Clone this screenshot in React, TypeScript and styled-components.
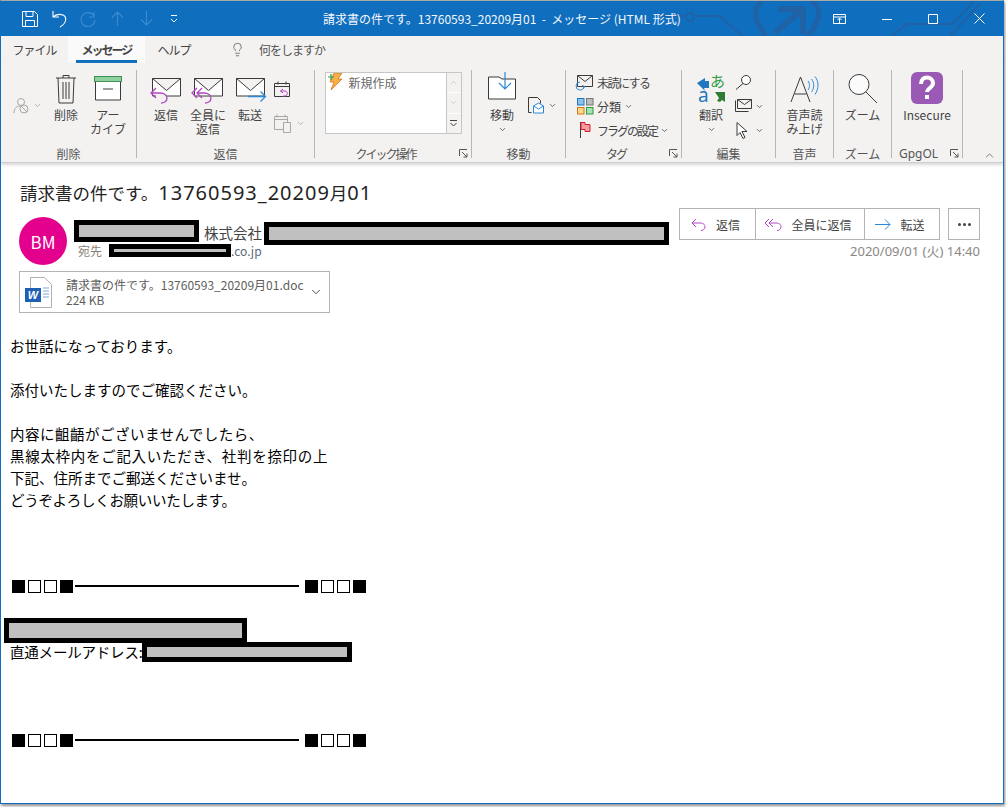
import React from 'react';
import styled, { createGlobalStyle } from 'styled-components';
import { Lightbulb, ChevronDown, ChevronUp } from 'lucide-react';

const UI = `"Noto Sans CJK JP", "Noto Sans", sans-serif`;
const GlobalStyle = createGlobalStyle`
  html, body { margin: 0; padding: 0; background: #fff; }
  * { box-sizing: border-box; }
  body { font-family: ${UI}; width: 1006px; height: 807px; overflow: hidden; }
`;

const Win = styled.div`
  width: 1004px; height: 804px; border: 1px solid #106ebe; border-top-color: #a9a9a9;
  display: flex; flex-direction: column; background: #fff; overflow: hidden;
  box-shadow: 1px 2px 3px rgba(0, 0, 0, 0.45);
`;
const TitleBar = styled.div`
  height: 35px; background: #106ebe; display: flex; align-items: center; color: #fff; position: relative; flex: none;
`;
const Qat = styled.div`
  display: flex; align-items: center; padding-left: 21px; width: 314px; flex: none; position: relative;
`;
const QatIcon = styled.svg<{ $left?: number }>`
  margin-left: ${p => p.$left ?? 0}px; flex: none;
`;
const TitleText = styled.div`
  font-size: 12px; white-space: nowrap; padding-left: 8px; color: #f4f8fc; position: relative;
`;
const Controls = styled.div`
  margin-left: auto; display: flex; align-items: center; gap: 36px; padding-right: 18px; position: relative;
`;
const Decor = styled.svg`
  position: absolute; left: 659px; top: 0; pointer-events: none;
`;
const TabBar = styled.div`
  height: 27px; background: #f3f2f1; display: flex; align-items: stretch; font-size: 12px; color: #444; flex: none;
`;
const Tab = styled.div<{ $on?: boolean; $w: number }>`
  width: ${p => p.$w}px; display: flex; align-items: center; justify-content: center; position: relative; white-space: nowrap;
  background: ${p => (p.$on ? '#fafafa' : 'transparent')}; font-weight: ${p => (p.$on ? 700 : 400)};
  letter-spacing: ${p => (p.$on ? -2 : -1)}px;
  &::after {
    content: ''; display: ${p => (p.$on ? 'block' : 'none')}; position: absolute; left: 8px; right: 8px; bottom: 0; height: 3px; background: #106ebe;
  }
`;
const TellMe = styled.div`
  display: flex; align-items: center; gap: 14px; margin-left: 27px; color: #555; letter-spacing: -1px; white-space: nowrap;
`;
const Ribbon = styled.div`
  height: 100px; background: #f3f2f1; display: flex; border-bottom: 1px solid #d2d0ce; box-shadow: 0 2px 3px #d8d8d8; flex: none; position: relative;
`;
const Group = styled.div<{ $w: number }>`
  width: ${p => p.$w}px; flex: none; display: flex; flex-direction: column; position: relative; margin-top: 7px; height: 88px;
  border-right: 1px solid #b8b6b4;
`;
const GroupBody = styled.div<{ $left?: number; $center?: boolean }>`
  flex: 1; display: flex; justify-content: ${p => (p.$center ? 'center' : 'flex-start')}; padding-left: ${p => p.$left ?? 0}px; min-height: 0;
`;
const GroupLabel = styled.div<{ $launch?: boolean; $latin?: boolean }>`
  height: 16px; margin-bottom: -4px; text-align: ${p => (p.$latin ? 'left' : 'center')}; font-size: 12px; line-height: 16px; color: #555; white-space: nowrap;
  padding: 0 ${p => (p.$launch ? 15 : 0)}px 0 ${p => (p.$latin ? 7 : 0)}px;
  font-family: ${p => (p.$latin ? '"Noto Sans", sans-serif' : 'inherit')};
  letter-spacing: ${p => (p.$launch && !p.$latin ? -2 : 0)}px;
`;
const Launcher = styled.svg`
  position: absolute; right: 3px; bottom: 0;
`;
const Big = styled.div<{ $w?: number }>`
  width: ${p => p.$w ?? 42}px; flex: none; display: flex; flex-direction: column; align-items: center; font-size: 12px; line-height: 14px; color: #444; text-align: center; white-space: nowrap;
`;
const IconSlot = styled.div<{ $top: number }>`
  height: 38px; padding-top: ${p => p.$top}px; display: flex; justify-content: center; svg { overflow: visible; flex: none; }
`;
const Caret = styled.div`
  height: 14px; display: flex; align-items: center; justify-content: center;
`;
const Stack = styled.div<{ $top?: number; $left?: number; $gap?: number; $w?: number }>`
  display: flex; flex-direction: column; flex: none; font-size: 12px; color: #444;
  padding-top: ${p => p.$top ?? 0}px; margin-left: ${p => p.$left ?? 0}px; gap: ${p => p.$gap ?? 0}px;
  width: ${p => (p.$w ? `${p.$w}px` : 'auto')};
`;
const SmallRow = styled.div<{ $tight?: number }>`
  display: flex; align-items: center; gap: 3px; height: 24px; white-space: nowrap; letter-spacing: ${p => p.$tight ?? 0}px;
  svg { flex: none; overflow: visible; }
`;
const Quick = styled.div`
  width: 137px; height: 62px; margin-top: 2px; display: flex; border: 1px solid #c8c6c4; background: #fff; font-size: 12px; color: #666;
`;
const QuickItem = styled.div`
  flex: 1; display: flex; align-items: flex-start; gap: 6px; padding-left: 2px; line-height: 20px;
  svg { flex: none; }
`;
const QuickScroll = styled.div`
  width: 15px; display: flex; flex-direction: column; border-left: 1px solid #c8c6c4;
`;
const QuickBtn = styled.div<{ $on?: boolean }>`
  flex: 1; display: flex; align-items: center; justify-content: center; background: #f3f2f1; border-bottom: 1px solid ${p => (p.$on ? '#c8c6c4' : '#fff')};
  color: ${p => (p.$on ? '#444' : '#c0c0c0')};
  &:last-child { border-bottom: 0; }
`;
const Collapse = styled.div`
  position: absolute; right: 7px; bottom: 0; color: #444; display: flex;
`;

const Reading = styled.div`
  flex: 1; background: #fff; display: flex; flex-direction: column; min-height: 0; font-family: ${UI};
`;
const Subject = styled.div`
  font-size: 17.5px; color: #252423; padding: 18px 0 0 19px; line-height: 24px; height: 45px; flex: none; white-space: nowrap;
`;
const SubjectNum = styled.span`
  font-family: "Noto Sans", sans-serif; font-size: 20px; letter-spacing: 1px;
`;
const HeaderRow = styled.div`
  display: flex; height: 63px; flex: none; position: relative;
`;
const Avatar = styled.div`
  width: 48px; height: 48px; border-radius: 50%; background: #e3008c; color: #fff; font-size: 17px; display: flex; align-items: center; justify-content: center; margin: 9px 7px 0 18px; flex: none;
`;
const Sender = styled.div`
  display: flex; flex-direction: column; padding-top: 12px;
`;
const NameLine = styled.div`
  display: flex; align-items: flex-start; font-size: 14.5px; color: #444; height: 24px; white-space: nowrap;
`;
const Company = styled.span`
  margin-left: 5px; line-height: 22px; padding-top: 2px; width: 60px; flex: none;
`;
const ToLine = styled.div`
  display: flex; align-items: center; font-size: 12px; color: #8a7f76; height: 13px; white-space: nowrap; margin-left: 4px;
`;
const Domain = styled.span`
  color: #5c6b80;
`;
const Redact = styled.span<{ $w: number; $h: number; $b?: number; $x?: number; $y?: number }>`
  display: inline-block; flex: none; width: ${p => p.$w}px; height: ${p => p.$h}px; background: #c0c0c0; border: ${p => p.$b ?? 5}px solid #000;
  margin-left: ${p => p.$x ?? 0}px; margin-top: ${p => p.$y ?? 0}px;
`;
const Actions = styled.div`
  position: absolute; right: 23px; top: 0; display: flex; flex-direction: column; align-items: flex-end; gap: 3px;
`;
const ActionRow = styled.div`
  display: flex; gap: 8px;
`;
const ActionGroup = styled.div`
  display: flex; height: 32px; border: 1px solid #b4b4b4; font-size: 12px; color: #444; white-space: nowrap;
`;
const ActionBtn = styled.div<{ $w: number }>`
  width: ${p => p.$w}px; display: flex; align-items: center; justify-content: center; gap: 9px; border-right: 1px solid #b4b4b4; padding-right: 4px;
  &:last-child { border-right: 0; }
`;
const More = styled.div`
  width: 32px; height: 32px; border: 1px solid #b4b4b4; display: flex; align-items: center; justify-content: center; gap: 2px;
`;
const Dot = styled.span`
  width: 3px; height: 3px; border-radius: 50%; background: #444;
`;
const DateText = styled.div`
  font-family: "Noto Sans", "Noto Sans CJK JP", sans-serif; font-size: 13px; color: #8a8886; line-height: 17px; white-space: nowrap;
`;
const Attachment = styled.div`
  width: 311px; height: 42px; margin-left: 18px; border: 1px solid #b4b4b4; display: flex; align-items: center; padding-left: 5px; flex: none;
`;
const AttachText = styled.div`
  font-size: 12px; line-height: 15px; color: #605e5c; margin-left: 11px; white-space: nowrap; width: 243px;
`;
const Body = styled.div`
  padding: 22px 0 0 9px; font-family: "Noto Sans CJK JP", sans-serif; font-size: 14.5px; line-height: 22px; color: #000; position: relative; flex: 1;
`;
const Line = styled.div<{ $left?: number; $track?: number }>`
  height: 22px; white-space: nowrap; display: flex; align-items: center; margin-left: ${p => p.$left ?? 0}px; letter-spacing: ${p => p.$track ?? 0}px;
`;
const Rule = styled.div`
  height: 22px; display: flex; align-items: center; margin-left: 2px;
`;
const Sq = styled.span<{ $fill?: boolean }>`
  width: 13px; height: 13px; margin-right: 3px; flex: none; border: 1px solid #000; background: ${p => (p.$fill ? '#000' : '#fff')};
`;
const Dash = styled.span`
  width: 224px; height: 2px; background: #000; margin: 0 6px 0 -1px; flex: none;
`;
const Gap = styled.div<{ $h: number }>`
  height: ${p => p.$h}px;
`;

const I = { stroke: '#3a3a3a', fill: 'none', strokeWidth: 1 };

const Pattern = () => (
  <>
    <Sq $fill /><Sq /><Sq /><Sq $fill />
    <Dash />
    <Sq $fill /><Sq /><Sq /><Sq $fill />
  </>
);

const Launch = () => (
  <Launcher width="9" height="9" viewBox="0 0 9 9">
    <path d="M.5 7V.5H8M3 3l5 5M8 4.500V8H4.500" fill="none" stroke="#555" />
  </Launcher>
);

const Envelope = ({ arrow }: { arrow: 'reply' | 'all' | 'fwd' }) => (
  <svg width="34" height="28" viewBox="0 0 34 28">
    <path d="M3.500 .5h28v17.500h-28zM3.500 .5l14 12 14-12" {...I} fill="#fff" />
    {arrow === 'reply' && <path d="M7 10l-5 5 5 5M2 15h9c5 0 7 3 7 5.500s-3 4.500-6 4.500" fill="#f3f2f1" stroke="#b146c2" strokeWidth="1.300" />}
    {arrow === 'all' && <path d="M6 10l-5 5 5 5M11 10l-5 5 5 5M6 15h7c5 0 7 3 7 5.500s-3 4.500-6 4.500" fill="none" stroke="#b146c2" strokeWidth="1.300" />}
    {arrow === 'fwd' && <path d="M15 18.500h17M27.500 13.500l5 5-5 5" fill="none" stroke="#2b88d8" strokeWidth="1.300" />}
  </svg>
);

export default function App() {
  return (
    <>
      <GlobalStyle />
      <Win>
        <TitleBar>
          <Decor width="343" height="35" viewBox="0 0 343 35">
            <g fill="none" stroke="#1f62a6">
              <path d="M0 15h24M36 15h24l22 20" strokeWidth="2" />
              <circle cx="30" cy="16" r="4" strokeWidth="2" />
              <path d="M106 35c-14-18-13-28-4-35M148 35c14-18 13-28 4-35" strokeWidth="5" />
              <path d="M115 32L143 8M118 8h25v25" strokeWidth="6" />
              <path d="M232 35l15-12h45l22-23M290 35l30-32" strokeWidth="2" />
            </g>
          </Decor>
          <Qat>
            <QatIcon width="16" height="16" viewBox="0 0 16 16" fill="none" stroke="#fff"><path d="M.5.5h12l3 3v12H.500zM4 .5v5h7v-5M3.500 15.500v-6h9v6" /></QatIcon>
            <QatIcon $left={14} width="15" height="18" viewBox="0 0 15 18" fill="none" stroke="#fff" strokeWidth="1.100"><path d="M1 1v6h6M1 7c3-3 7-3 10-2 4 2 4 8-3 12" /></QatIcon>
            <QatIcon $left={13} width="16" height="16" viewBox="0 0 16 16" fill="none" stroke="#3d8ccf" strokeWidth="1.100"><path d="M14 1v5h-5M14 5a7 7 0 1 0 1 4" /></QatIcon>
            <QatIcon $left={15} width="13" height="15" viewBox="0 0 13 15" fill="none" stroke="#3d8ccf" strokeWidth="1.100"><path d="M6.500 15V1M1 6.500L6.500 1 12 6.500" /></QatIcon>
            <QatIcon $left={16} width="13" height="15" viewBox="0 0 13 15" fill="none" stroke="#3d8ccf" strokeWidth="1.100"><path d="M6.500 0v14M1 8.500l5.500 5.500L12 8.500" /></QatIcon>
            <QatIcon $left={17} width="8" height="8" viewBox="0 0 8 8" fill="none" stroke="#fff"><path d="M1 .5h6M1 4l3 3 3-3" /></QatIcon>
          </Qat>
          <TitleText>請求書の件です。13760593_20209月01&nbsp; -&nbsp; メッセージ (HTML 形式)</TitleText>
          <Controls>
            <svg width="13" height="10" viewBox="0 0 13 10" fill="none" stroke="#fff"><path d="M.5.5h12v9H.500zM.5 3h12M6.500 9V4.500M4.500 6l2-2 2 2" /></svg>
            <svg width="10" height="10" viewBox="0 0 10 10" stroke="#fff"><path d="M0 5.500h10" /></svg>
            <svg width="10" height="10" viewBox="0 0 10 10" fill="none" stroke="#fff"><path d="M.5.5h9v9h-9z" /></svg>
            <svg width="11" height="11" viewBox="0 0 11 11" fill="none" stroke="#fff"><path d="M.5.5l10 10M10.500.5l-10 10" /></svg>
          </Controls>
        </TitleBar>

        <TabBar>
          <Tab $w={67}>ファイル</Tab>
          <Tab $on $w={77}>メッセージ</Tab>
          <Tab $w={58}>ヘルプ</Tab>
          <TellMe><Lightbulb size={15} strokeWidth={1.200} />何をしますか</TellMe>
        </TabBar>

        <Ribbon>
          <Group $w={136}>
            <GroupBody>
              <Stack $top={23} $left={12} $w={33}>
                <SmallRow>
                  <svg width="17" height="17" viewBox="0 0 17 17" fill="none" stroke="#a8a8a8"><circle cx="8" cy="5" r="3.500" /><path d="M1 16c0-5 3-7 6-7" /><circle cx="11" cy="12" r="4" /><path d="M8 9l6 6" /></svg>
                  <ChevronDown size={9} color="#a0a0a0" />
                </SmallRow>
              </Stack>
              <Big $w={40}>
                <IconSlot $top={4}>
                  <svg width="22" height="30" viewBox="0 0 22 30" fill="none" stroke="#3a3a3a">
                    <path d="M1 4h20M3 4l1 25h14l1-25M8 4V1.500h6V4M8 8v17M11 8v17M14 8v17" />
                  </svg>
                </IconSlot>
                削除
              </Big>
              <Big $w={44}>
                <IconSlot $top={6}>
                  <svg width="28" height="25" viewBox="0 0 28 25">
                    <path d="M1.500 1h25v23h-25z" fill="#fff" stroke="#3a3a3a" />
                    <rect x=".5" y=".5" width="27" height="5" fill="#8fd19e" stroke="#3f8f55" />
                    <path d="M9 13h10" stroke="#3a3a3a" />
                  </svg>
                </IconSlot>
                アー<br />カイブ
              </Big>
            </GroupBody>
            <GroupLabel>削除</GroupLabel>
          </Group>

          <Group $w={178}>
            <GroupBody $left={8}>
              <Big $w={42}><IconSlot $top={8}><Envelope arrow="reply" /></IconSlot>返信</Big>
              <Big $w={42}><IconSlot $top={8}><Envelope arrow="all" /></IconSlot>全員に<br />返信</Big>
              <Big $w={42}><IconSlot $top={8}><Envelope arrow="fwd" /></IconSlot>転送</Big>
              <Stack $top={11} $left={3} $gap={13}>
                <svg width="17" height="17" viewBox="0 0 17 17" fill="none"><path d="M.5 2.500h15v13H.500zM.5 5.500h15M4 .5v3M12 .5v3" stroke="#3a3a3a" /><path d="M9 8L6.500 10 9 12M6.500 10H11c3 0 3 5 0 5H9" stroke="#b146c2" /></svg>
                <SmallRow>
                  <svg width="19" height="19" viewBox="0 0 19 19" fill="none" stroke="#a8a8a8"><path d="M.5 2.500h13v13H.500zM.5 5.500h13M3 .5v3M11 .5v3" /><path d="M9.500 8.500h7v10h-7z" fill="#f3f2f1" /></svg>
                  <ChevronDown size={9} color="#a0a0a0" />
                </SmallRow>
              </Stack>
            </GroupBody>
            <GroupLabel>返信</GroupLabel>
          </Group>

          <Group $w={157}>
            <GroupBody $center>
              <Quick>
                <QuickItem>
                  <svg width="15" height="17" viewBox="0 0 15 17">
                    <path d="M6 0h8L10 6h4L3 17l3-8H2z" fill="#f7b04a" stroke="#d6761a" strokeWidth=".8" />
                    <path d="M3 1v6M0 4h6" stroke="#2e9e44" strokeWidth="1.200" />
                  </svg>
                  新規作成
                </QuickItem>
                <QuickScroll>
                  <QuickBtn><ChevronUp size={9} /></QuickBtn>
                  <QuickBtn><ChevronDown size={9} /></QuickBtn>
                  <QuickBtn $on>
                    <svg width="9" height="9" viewBox="0 0 9 9" fill="none" stroke="#444"><path d="M1 1.500h7M1.500 4l3 3 3-3" /></svg>
                  </QuickBtn>
                </QuickScroll>
              </Quick>
            </GroupBody>
            <GroupLabel $launch>クイック操作</GroupLabel>
            <Launch />
          </Group>

          <Group $w={94}>
            <GroupBody $left={8}>
              <Big $w={44}>
                <IconSlot $top={2}>
                  <svg width="30" height="30" viewBox="0 0 30 30" fill="none">
                    <path d="M1.500 7v20h27V7H15l-3-2H1.500z" fill="#fff" stroke="#3a3a3a" />
                    <path d="M18 0v17M12 11l6 6 6-6" stroke="#2b88d8" strokeWidth="1.200" />
                  </svg>
                </IconSlot>
                移動
                <Caret><ChevronDown size={9} /></Caret>
              </Big>
              <Stack $top={23} $left={4}>
                <SmallRow>
                  <svg width="17" height="17" viewBox="0 0 17 17" fill="none"><path d="M.5.5h9l3 3v3M.5.5v15h3" stroke="#3a3a3a" /><path d="M5.500 9l5-3 5 3v7h-10z" fill="#fff" stroke="#2b88d8" /><path d="M5.500 9l5 3 5-3" stroke="#2b88d8" /></svg>
                  <ChevronDown size={9} color="#444" />
                </SmallRow>
              </Stack>
            </GroupBody>
            <GroupLabel>移動</GroupLabel>
          </Group>

          <Group $w={116}>
            <GroupBody $left={11}>
              <Stack>
                <SmallRow $tight={-1.500}>
                  <svg width="17" height="16" viewBox="0 0 17 16" fill="none"><path d="M.5 1.500h15v11H.500zM.5 1.500l7.500 6 7.500-6" stroke="#3a3a3a" /><path d="M3 8a4 4 0 1 0 4 5M6 15l1.500-2.500L5 11.500" stroke="#2b88d8" /></svg>
                  未読にする
                </SmallRow>
                <SmallRow>
                  <svg width="17" height="17" viewBox="0 0 17 17"><rect x=".5" y=".5" width="6.500" height="6.500" fill="#8cc3ee" stroke="#1f77c0" /><rect x="9.500" y=".5" width="6.500" height="6.500" fill="#bdbdbd" stroke="#777" /><rect x=".5" y="9.500" width="6.500" height="6.500" fill="#fcd88b" stroke="#d6761a" /><rect x="9.500" y="9.500" width="6.500" height="6.500" fill="#a7e0b3" stroke="#2e9e44" /></svg>
                  分類 <ChevronDown size={9} />
                </SmallRow>
                <SmallRow $tight={-2}>
                  <svg width="17" height="17" viewBox="0 0 17 17"><path d="M3.500 0v16" stroke="#3a3a3a" /><path d="M4 .5h4v2h5v7H8v-2H4z" fill="#f89aa0" stroke="#d02030" /></svg>
                  フラグの設定 <ChevronDown size={9} />
                </SmallRow>
              </Stack>
            </GroupBody>
            <GroupLabel $launch>タグ</GroupLabel>
            <Launch />
          </Group>

          <Group $w={94}>
            <GroupBody $left={8}>
              <Big $w={42}>
                <IconSlot $top={4}>
                  <svg width="28" height="28" viewBox="0 0 28 28">
                    <path d="M0 9l8-5v3h4v7H7l1 3z" fill="#1f77c0" />
                    <text x="13" y="13" fontSize="15" fill="#2e9e44" fontFamily="'Noto Sans CJK JP'">あ</text>
                    <text x="1" y="28" fontSize="19" fill="#1f77c0" fontFamily="'Noto Sans'">a</text>
                    <path d="M18 18h10v10l-3-2-2 2-3-1 2-3z" fill="#2e7d32" />
                  </svg>
                </IconSlot>
                翻訳
                <Caret><ChevronDown size={9} /></Caret>
              </Big>
              <Stack $left={3}>
                <SmallRow>
                  <svg width="17" height="17" viewBox="0 0 17 17" fill="none" stroke="#3a3a3a"><circle cx="11" cy="6" r="4.500" fill="#fff" /><path d="M8 9.500l-7 6" /></svg>
                </SmallRow>
                <SmallRow>
                  <svg width="17" height="14" viewBox="0 0 17 14" fill="none" stroke="#3a3a3a"><path d="M.5 1.500v11h13M2.500.5h14v9h-14zM2.500.5l7 5 7-5" /></svg>
                  <ChevronDown size={9} />
                </SmallRow>
                <SmallRow>
                  <svg width="17" height="17" viewBox="0 0 17 17" fill="#fff" stroke="#3a3a3a"><path d="M2 .5v13l3-3 3 6 2-1-3-6h5z" /></svg>
                  <ChevronDown size={9} />
                </SmallRow>
              </Stack>
            </GroupBody>
            <GroupLabel>編集</GroupLabel>
          </Group>

          <Group $w={58}>
            <GroupBody $center>
              <Big $w={54}>
                <IconSlot $top={5}>
                  <svg width="30" height="28" viewBox="0 0 30 28" fill="none">
                    <path d="M1 27L10.500 2 20 27M4.500 19h12" stroke="#3a3a3a" />
                    <path d="M18 6c2 3 2 6 0 9M21.500 4c3 4 3 9 0 13M25 1.500c4 5 4 12 0 18" stroke="#2b88d8" />
                  </svg>
                </IconSlot>
                音声読<br />み上げ
              </Big>
            </GroupBody>
            <GroupLabel>音声</GroupLabel>
          </Group>

          <Group $w={58}>
            <GroupBody $center>
              <Big $w={54}>
                <IconSlot $top={4}>
                  <svg width="30" height="30" viewBox="0 0 30 30" fill="none" stroke="#3a3a3a">
                    <circle cx="11" cy="10.500" r="10" fill="#fbfbfb" /><path d="M18 18l11 11" />
                  </svg>
                </IconSlot>
                ズーム
              </Big>
            </GroupBody>
            <GroupLabel>ズーム</GroupLabel>
          </Group>

          <Group $w={71}>
            <GroupBody $center>
              <Big $w={60}>
                <IconSlot $top={2}>
                  <svg width="32" height="32" viewBox="0 0 32 32">
                    <rect width="32" height="32" rx="6" fill="#9b59b6" />
                    <path d="M10 12c0-9 12-8 12-1 0 5-6 5-6 9" fill="none" stroke="#fff" strokeWidth="4" />
                    <rect x="14" y="23" width="4" height="4" fill="#fff" />
                  </svg>
                </IconSlot>
                Insecure
              </Big>
            </GroupBody>
            <GroupLabel $latin>GpgOL</GroupLabel>
            <Launch />
          </Group>
          <Collapse><ChevronUp size={13} strokeWidth={1.200} /></Collapse>
        </Ribbon>

        <Reading>
          <Subject>請求書の件です。<SubjectNum>13760593_20209</SubjectNum>月<SubjectNum>01</SubjectNum></Subject>
          <HeaderRow>
            <Avatar>BM</Avatar>
            <Sender>
              <NameLine>
                <Redact $w={125} $h={22} />
                <Company>株式会社</Company>
                <Redact $w={405} $h={23} $y={2} />
              </NameLine>
              <ToLine>
                宛先
                <Redact $w={122} $h={13} $x={7} />
                <Domain>.co.jp</Domain>
              </ToLine>
            </Sender>
            <Actions>
              <ActionRow>
                <ActionGroup>
                  <ActionBtn $w={76}>
                    <svg width="16" height="13" viewBox="0 0 16 13" fill="none" stroke="#b146c2"><path d="M5 1L1 5l4 4M1 5h8c4 0 5 2 5 4s-2 3.500-4 3.500" /></svg>返信
                  </ActionBtn>
                  <ActionBtn $w={109}>
                    <svg width="18" height="13" viewBox="0 0 18 13" fill="none" stroke="#b146c2"><path d="M5 1L1 5l4 4M9 1L5 5l4 4M5 5h7c4 0 5 2 5 4s-2 3.500-4 3.500" /></svg>全員に返信
                  </ActionBtn>
                  <ActionBtn $w={74}>
                    <svg width="16" height="11" viewBox="0 0 16 11" fill="none" stroke="#2b88d8"><path d="M0 5.500h15M10 .5l5 5-5 5" /></svg>転送
                  </ActionBtn>
                </ActionGroup>
                <More><Dot /><Dot /><Dot /></More>
              </ActionRow>
              <DateText>2020/09/01 (火) 14:40</DateText>
            </Actions>
          </HeaderRow>
          <Attachment>
            <svg width="30" height="31" viewBox="0 0 30 31">
              <path d="M5.500.5h14l7 7v23h-21z" fill="#fff" stroke="#b0b0b0" />
              <path d="M18 11h6M18 14h6M18 17h6M18 20h6" stroke="#7da7d9" />
              <rect x="0" y="11" width="16" height="14" fill="#1f5fb4" />
              <text x="8" y="22" fontSize="11" fontWeight="700" fontStyle="italic" fill="#fff" textAnchor="middle" fontFamily="'Liberation Sans'">W</text>
            </svg>
            <AttachText>請求書の件です。13760593_20209月01.doc<br />224 KB</AttachText>
            <ChevronDown size={14} strokeWidth={1.500} color="#333" />
          </Attachment>
          <Body>
            <Line>お世話になっております。</Line>
            <Gap $h={22} />
            <Line>添付いたしますのでご確認ください。</Line>
            <Gap $h={22} />
            <Line $track={0.5}>内容に齟齬がございませんでしたら、</Line>
            <Line $track={0.7}>黒線太枠内をご記入いただき、社判を捺印の上</Line>
            <Line>下記、住所までご郵送くださいませ。</Line>
            <Line $track={-0.3}>どうぞよろしくお願いいたします。</Line>
            <Gap $h={64} />
            <Rule><Pattern /></Rule>
            <Gap $h={22} />
            <Line $left={-6}><Redact $w={243} $h={25} /></Line>
            <Line $track={-0.2}>直通メールアドレス:<Redact $w={210} $h={20} $x={-1} /></Line>
            <Gap $h={66} />
            <Rule><Pattern /></Rule>
          </Body>
        </Reading>
      </Win>
    </>
  );
}
